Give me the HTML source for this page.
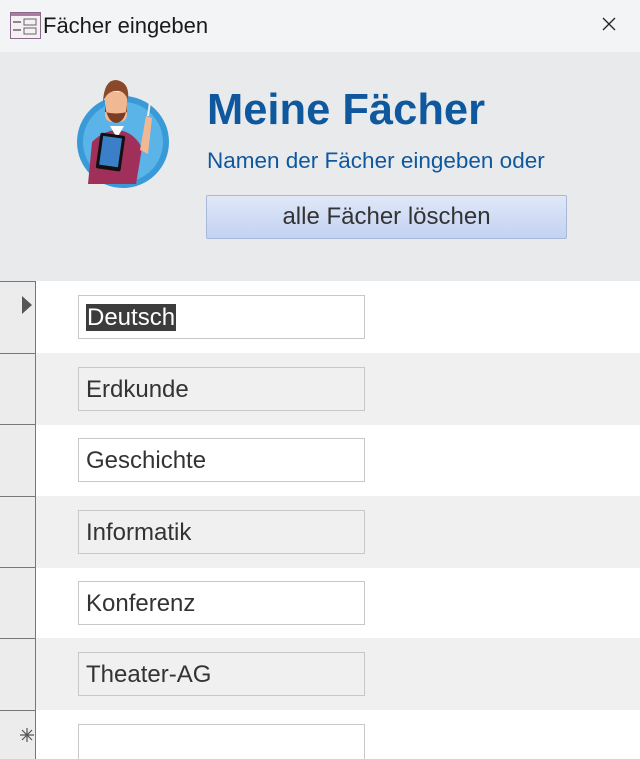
<!DOCTYPE html>
<html><head><meta charset="utf-8"><style>
*{margin:0;padding:0;box-sizing:border-box}
html,body{width:640px;height:759px;overflow:hidden}
body{background:#fff;font-family:"Liberation Sans",sans-serif;position:relative}
.title{position:absolute;left:0;top:0;width:640px;height:52px;background:#f3f4f6}
.title .t{position:absolute;left:43px;top:13px;font-size:22px;color:#1a1a1a}
.hdr{position:absolute;left:0;top:52px;width:640px;height:229px;background:#e9eaec}
.h1{position:absolute;left:207px;top:86px;font-size:43.5px;font-weight:bold;color:#10589e}
.sub{position:absolute;left:207px;top:148px;font-size:22.5px;color:#10589e}
.btn{position:absolute;left:206px;top:195px;width:361px;height:44px;border:1px solid #a8b8d8;border-radius:2px;background:linear-gradient(#e0e8f8,#c3d2f2);font-size:24px;color:#333;text-align:center;line-height:42px}
.row{position:absolute;left:0;width:640px;height:72px}
.sel{position:absolute;left:0;top:0;width:36px;height:100%;background:#ececec;border-right:1px solid #777;border-top:1px solid #777}
.box{position:absolute;left:78px;top:14px;width:287px;height:44px;border:1px solid #c8c8c8;font-size:24px;color:#333;padding:8px 0 0 7px}
.alt{background:#f0f0f0}
.alt .box{background:#f0f0f0}
</style></head><body>
<div class="title">
<svg style="position:absolute;left:10px;top:12px" width="31" height="27" viewBox="0 0 31 27"><rect x="0.5" y="0.5" width="30" height="26" fill="#f4f0f4" stroke="#8a6a8a"/><rect x="1" y="1" width="29" height="3" fill="#b07aa0"/><line x1="3" y1="10" x2="11" y2="10" stroke="#666" stroke-width="1.5"/><line x1="3" y1="18" x2="11" y2="18" stroke="#666" stroke-width="1.5"/><rect x="14" y="7" width="12" height="6" fill="none" stroke="#666"/><rect x="14" y="16" width="12" height="6" fill="none" stroke="#666"/></svg>
<div class="t">Fächer eingeben</div>
<svg style="position:absolute;left:602px;top:17px" width="14" height="14" viewBox="0 0 14 14"><path d="M1 1L13 13M13 1L1 13" stroke="#222" stroke-width="1.3"/></svg>
</div>
<div class="hdr"></div>
<svg style="position:absolute;left:74px;top:78px" width="100" height="112" viewBox="0 0 100 112">
<circle cx="49" cy="64" r="46" fill="#3a9ad8"/><circle cx="49" cy="64" r="40" fill="#5ab4e8"/>
<path d="M14 106 L18 64 Q30 52 44 52 Q60 54 68 70 L62 106Z" fill="#a0305a"/>
<path d="M36 48 L43 60 L50 48Z" fill="#fff"/>
<rect x="31" y="14" width="22" height="30" rx="7" fill="#f1b894"/>
<path d="M31 26 Q33 44 42 45 Q52 44 53 26 L53 34 Q42 37 31 34Z" fill="#7a3e24"/>
<path d="M29 24 Q30 2 42 2 Q56 4 54 22 Q50 12 42 13 Q33 13 29 24Z" fill="#8a4a2a"/>
<rect x="24" y="56" width="25" height="36" rx="2" fill="#111" transform="rotate(8 36 74)"/>
<rect x="27" y="59" width="19" height="29" fill="#3a7fc8" transform="rotate(8 36 74)"/>
<path d="M66 72 L72 38 L78 40 L74 76Z" fill="#f1b894"/>
<line x1="74" y1="38" x2="76" y2="24" stroke="#eee" stroke-width="2"/>
</svg>
<div class="h1">Meine Fächer</div>
<div class="sub">Namen der Fächer eingeben oder</div>
<div class="btn">alle Fächer löschen</div>

<div class="row" style="top:281px"><div class="sel"><svg style="position:absolute;left:22px;top:14px" width="10" height="18"><path d="M0 0L10 9L0 18Z" fill="#555"/></svg></div><div class="box"><span style="background:#3c3c3c;color:#fff;padding:0 1px">Deutsch</span></div></div>
<div class="row alt" style="top:353px"><div class="sel"></div><div class="box">Erdkunde</div></div>
<div class="row" style="top:424px"><div class="sel"></div><div class="box">Geschichte</div></div>
<div class="row alt" style="top:496px"><div class="sel"></div><div class="box">Informatik</div></div>
<div class="row" style="top:567px"><div class="sel"></div><div class="box">Konferenz</div></div>
<div class="row alt" style="top:638px"><div class="sel"></div><div class="box">Theater-AG</div></div>
<div class="row" style="top:710px"><div class="sel"><svg style="position:absolute;left:19px;top:16px" width="16" height="16" viewBox="0 0 16 16"><path d="M8 1V15M1 8H15M3 3L13 13M13 3L3 13" stroke="#555" stroke-width="1.2"/></svg></div><div class="box"></div></div>
</body></html>
